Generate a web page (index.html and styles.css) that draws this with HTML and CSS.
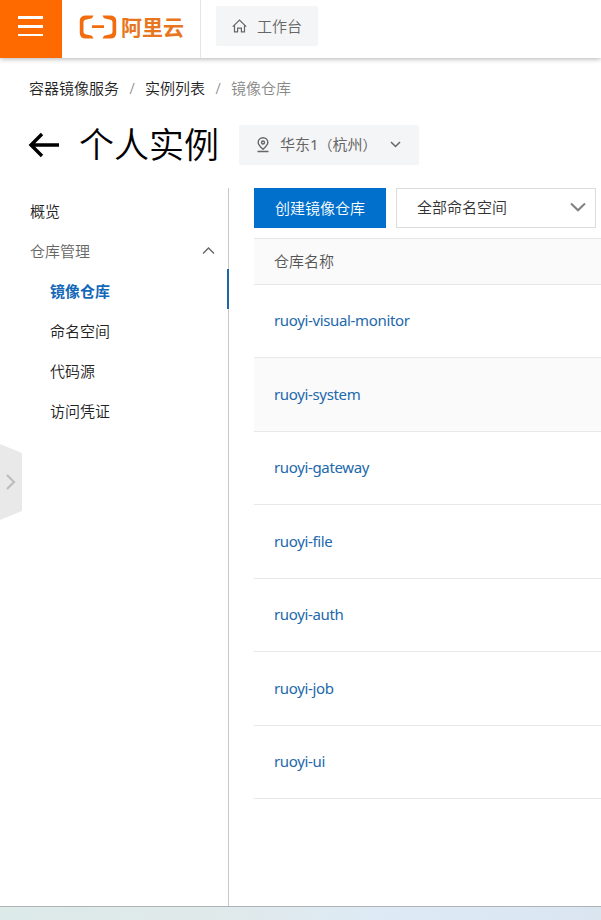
FILE: index.html
```html
<!DOCTYPE html>
<html lang="zh-CN">
<head>
<meta charset="utf-8">
<title>容器镜像服务</title>
<link rel="stylesheet" href="styles.css">
</head>
<body>
<div class="page">
  <header class="topbar">
    <button class="menu" aria-label="菜单"><span></span><span></span><span></span></button>
    <a class="brand">
      <svg width="38" height="24" viewBox="0 0 38 24" fill="#f26c0d"><path d="M14.5 .5H7Q.8 .5 .8 6V18Q.8 23.500 7 23.500H14.500L13 20.800L6.500 19.200Q4.500 18.700 4.500 17V7Q4.500 5.300 6.500 4.800L13 3.200ZM23.500 .5H31Q37.200 .5 37.200 6V18Q37.200 23.500 31 23.500H23.500L25 20.800L31.500 19.200Q33.500 18.700 33.500 17V7Q33.500 5.300 31.500 4.800L25 3.200ZM13 10.300H25V12.900H13Z"/></svg>
      <span class="brand-name">阿里云</span>
    </a>
    <a class="workbench">
      <svg width="15" height="15" viewBox="0 0 15 15" fill="none" stroke="#666" stroke-width="1.2"><path d="M.8 8.600L7.500 2L14.200 8.600M2.500 7.500V13.800H5.600V10.200H9.400V13.800H12.500V7.500"/></svg>
      <span>工作台</span>
    </a>
  </header>
  <nav class="crumbs"><a>容器镜像服务</a><i>/</i><a>实例列表</a><i>/</i><span>镜像仓库</span></nav>
  <div class="heading">
    <svg class="back" width="32" height="26" viewBox="0 0 32 26" fill="none" stroke="#000" stroke-width="3.4"><path d="M31 13H3M14 2L3 13L14 24"/></svg>
    <h1>个人实例</h1>
    <div class="region">
      <svg width="14" height="16" viewBox="0 0 14 16" fill="none" stroke="#666" stroke-width="1.4"><path d="M7 12.300C4 9.500 2.200 7.900 2.200 5.500A4.800 4.800 0 0 1 11.800 5.500C11.800 7.900 10 9.500 7 12.300ZM1.500 14.500H12.500"/><circle cx="7" cy="5.500" r="1.500"/></svg>
      <span>华东1<b>（</b>杭州<b>）</b></span>
      <svg class="down" width="11" height="8" viewBox="0 0 11 8" fill="none" stroke="#666" stroke-width="1.5"><path d="M1 1L5.500 5.500L10 1"/></svg>
    </div>
  </div>
  <div class="body">
    <aside class="side">
      <a class="item">概览</a>
      <a class="item group">仓库管理<svg width="13" height="8" viewBox="0 0 13 8" fill="none" stroke="#666" stroke-width="1.4"><path d="M1 6.500L6.500 1L12 6.500"/></svg></a>
      <a class="item sub active">镜像仓库</a>
      <a class="item sub">命名空间</a>
      <a class="item sub">代码源</a>
      <a class="item sub">访问凭证</a>
    </aside>
    <main class="main">
      <div class="tools">
        <button class="create">创建镜像仓库</button>
        <div class="select"><span>全部命名空间</span><svg width="16" height="10" viewBox="0 0 16 10" fill="none" stroke="#808080" stroke-width="2"><path d="M1 1.500L8 8.300L15 1.500"/></svg></div>
      </div>
      <div class="table">
        <div class="th">仓库名称</div>
        <div class="row"><a>ruoyi-visual-monitor</a></div>
        <div class="row hover"><a>ruoyi-system</a></div>
        <div class="row"><a>ruoyi-gateway</a></div>
        <div class="row"><a>ruoyi-file</a></div>
        <div class="row"><a>ruoyi-auth</a></div>
        <div class="row"><a>ruoyi-job</a></div>
        <div class="row"><a>ruoyi-ui</a></div>
      </div>
    </main>
  </div>
  <footer class="strip"></footer>
  <div class="drawer"><svg width="22" height="77" viewBox="0 0 22 77"><path d="M0 0L22 9V67L0 76Z" fill="#e9e9e9"/><path d="M7 31L14 38L7 45" fill="none" stroke="#bdbdbd" stroke-width="2.2"/></svg></div>
</div>
</body>
</html>
```
FILE: styles.css
```css
* { box-sizing: border-box; }
body {
  margin: 0;
  background: #fff;
  color: #222;
  font: 350 15px/20px "Noto Sans", "Noto Sans CJK SC", sans-serif;
}
svg { display: block; flex: none; }
button { border: 0; padding: 0; font: inherit; }
.page { position: relative; height: 920px; overflow: hidden; display: flex; flex-direction: column; }
.topbar { flex: none; display: flex; height: 58px; box-shadow: 0 1px 5px rgba(0, 0, 0, .3); }
.menu { width: 62px; background: #ff6a00; padding: 16px 19px 0 18px; display: flex; flex-direction: column; gap: 6px; }
.menu span { height: 3px; width: 25px; background: #fff; }
.menu span:last-child { height: 2px; }
.brand { width: 139px; display: flex; align-items: center; padding: 0 0 5px 17px; border-right: 1px solid #e5e5e5; }
.brand-name { margin-left: 4px; color: #e87520; font-size: 21px; font-weight: 700; line-height: 26px; white-space: nowrap; }
.workbench { margin: 6px 0 0 15px; width: 102px; height: 40px; background: #f4f5f7; border-radius: 2px; display: flex; align-items: center; padding: 0 0 1px 16px; gap: 10px; color: #666; }
.crumbs { flex: none; display: flex; margin: 20px 0 0 29px; height: 20px; }
.crumbs i { width: 26px; text-align: center; font-style: normal; color: #777; }
.crumbs span { color: #888; }
.heading { flex: none; display: flex; align-items: center; height: 40px; margin: 27px 0 23px 28px; }
h1 { margin: 0 0 0 19px; width: 140px; color: #000; font-size: 35px; line-height: 40px; font-weight: 350; white-space: nowrap; }
.region { margin-left: 20px; width: 180px; height: 40px; display: flex; align-items: center; background: #f4f5f7; border-radius: 2px; color: #666; padding: 0 18px 1px 17px; white-space: nowrap; }
.region span { margin-left: 10px; font-weight: 400; }
.region b { font-weight: inherit; font-size: 14px; }
.down { margin-left: auto; }
.body { flex: 1; display: flex; min-height: 0; }
.side { width: 229px; border-right: 1px solid #c8c8c8; padding-top: 1px; }
.item { display: flex; align-items: center; height: 40px; padding: 4px 0 0 30px; color: #222; }
.group { color: #666; justify-content: space-between; padding-right: 13px; }
.sub { padding-left: 50px; }
.active { margin-right: -1px; border-right: 2px solid #1f66a8; color: #1468b8; font-weight: 700; }
.main { flex: 1; margin-left: 25px; min-width: 0; }
.tools { display: flex; gap: 10px; }
.create { width: 132px; height: 40px; padding-bottom: 1px; background: #0070cc; color: #fff; }
.select { width: 200px; height: 40px; border: 1px solid #dcdcdc; display: flex; align-items: center; justify-content: space-between; padding: 0 9px 2px 20px; color: #333; }
.table { margin-top: 10px; }
.th { height: 46.5px; background: #fafafa; border-top: 1px solid #e8e8e8; border-bottom: 1px solid #e8e8e8; padding: 12px 20px; color: #555; }
.row { display: flex; align-items: center; height: 73.5px; border-bottom: 1px solid #e8e8e8; padding: 0 0 1px 20px; }
.row a { color: #2168ac; letter-spacing: -.35px; font-weight: 400; }
.hover { background: #fafafa; }
.strip { flex: none; height: 14px; border-top: 1px solid #adb3b6; background: linear-gradient(90deg, #dceae8, #e0e9ea 35%, #ddeaf5 65%, #dae5f0); }
.drawer { position: absolute; left: 0; top: 444px; }
```
